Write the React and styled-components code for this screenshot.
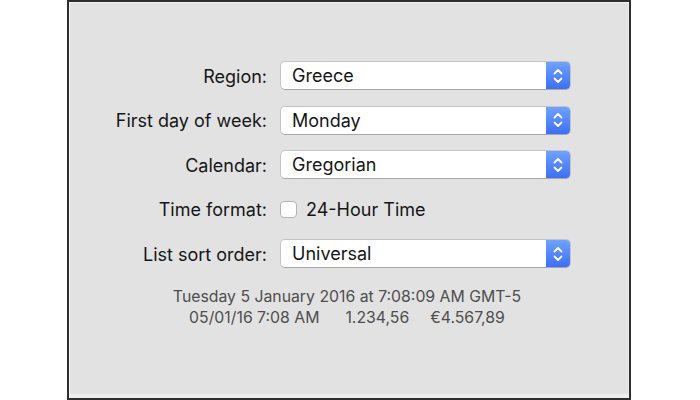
import React from "react";
import styled, { createGlobalStyle } from "styled-components";

const Global = createGlobalStyle`
  html, body { margin: 0; padding: 0; background: #ffffff; }
  body { font-family: Inter, "Liberation Sans", Arial, sans-serif; }
`;

const Page = styled.div`
  width: 700px;
  height: 400px;
  padding-left: 67px;
  box-sizing: border-box;
`;

const Panel = styled.div`
  width: 564px;
  height: 400px;
  box-sizing: border-box;
  background: #e2e2e2;
  border: 2px solid #2e2e2e;
  box-shadow: inset 1px 1px 0 #f4f4f4, inset -3px -6px 0 -2px #efefef;
  padding-top: 59px;
  display: flex;
  flex-direction: column;
`;

const Form = styled.div`
  display: grid;
  grid-template-columns: 198px 291px;
  grid-auto-rows: 30px;
  column-gap: 13px;
  row-gap: 14.5px;
`;

const Label = styled.div`
  font-size: 18px;
  color: #161616;
  text-align: right;
  align-self: center;
  white-space: nowrap;
  justify-self: end;
`;

const Popup = styled.div`
  position: relative;
  display: flex;
  align-items: center;
  height: 29px;
  box-sizing: border-box;
  background: #ffffff;
  border: 1px solid #c4c4c4;
  border-bottom-color: #a6a6a6;
  border-radius: 5px;
  overflow: hidden;
`;

const PopupText = styled.span`
  flex: 1;
  padding-left: 11px;
  font-size: 18px;
  color: #161616;
`;

const Stepper = styled.div`
  width: 24px;
  height: 100%;
  display: flex;
  align-items: center;
  justify-content: center;
  background: linear-gradient(#6fa2ff, #3d6ff5);
`;

const CheckRow = styled.label`
  display: flex;
  align-items: center;
  gap: 9px;
  font-size: 18px;
  color: #161616;
`;

const Box = styled.span`
  width: 17px;
  height: 17px;
  box-sizing: border-box;
  background: #ffffff;
  border: 1px solid #b4b4b4;
  border-radius: 4px;
`;

const Summary = styled.div`
  align-self: center;
  margin-top: 17px;
  margin-left: -4px;
  font-size: 15.8px;
  line-height: 21px;
  color: #4e4e4e;
  text-align: center;
`;

const Gap = styled.span`
  display: inline-block;
  width: ${(p) => p.w}px;
`;

const Chevrons = () => (
  <svg width="12" height="18" viewBox="0 0 12 18" fill="none" stroke="#fff" strokeWidth="1.8" strokeLinecap="round" strokeLinejoin="round">
    <polyline points="2.5,6.5 6,3 9.5,6.5" />
    <polyline points="2.5,11.5 6,15 9.5,11.5" />
  </svg>
);

const Select = ({ value }) => (
  <Popup>
    <PopupText>{value}</PopupText>
    <Stepper>
      <Chevrons />
    </Stepper>
  </Popup>
);

export default function App() {
  return (
    <>
      <Global />
      <Page>
        <Panel>
          <Form>
            <Label>Region:</Label>
            <Select value="Greece" />
            <Label>First day of week:</Label>
            <Select value="Monday" />
            <Label>Calendar:</Label>
            <Select value="Gregorian" />
            <Label>Time format:</Label>
            <CheckRow>
              <Box />
              24-Hour Time
            </CheckRow>
            <Label>List sort order:</Label>
            <Select value="Universal" />
          </Form>
          <Summary>
            <div>Tuesday 5 January 2016 at 7:08:09 AM GMT-5</div>
            <div>
              05/01/16 7:08 AM<Gap w={26} />1.234,56<Gap w={21} />€4.567,89
            </div>
          </Summary>
        </Panel>
      </Page>
    </>
  );
}
